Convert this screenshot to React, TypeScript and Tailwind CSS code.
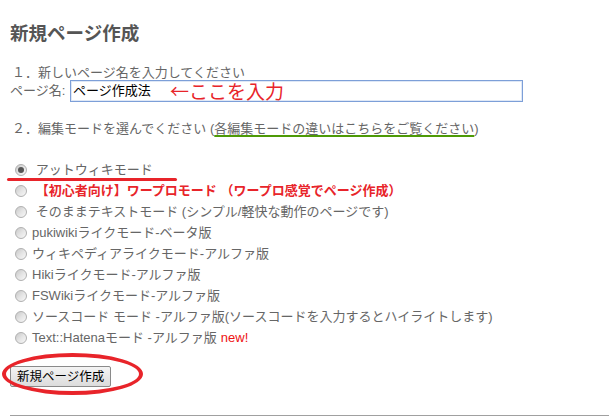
const modes: { label: string; checked?: boolean; lead?: boolean; beginner?: boolean; isNew?: boolean }[] = [
  { label: "アットウィキモード", checked: true, lead: true },
  { label: "【初心者向け】ワープロモード （ワープロ感覚でページ作成）", lead: true, beginner: true },
  { label: "そのままテキストモード (シンプル/軽快な動作のページです)", lead: true },
  { label: "pukiwikiライクモード-ベータ版" },
  { label: "ウィキペディアライクモード-アルファ版" },
  { label: "Hikiライクモード-アルファ版" },
  { label: "FSWikiライクモード-アルファ版" },
  { label: "ソースコード モード -アルファ版(ソースコードを入力するとハイライトします)" },
  { label: "Text::Hatenaモード -アルファ版", isNew: true },
];

function Radio({ checked }: { checked?: boolean }) {
  return (
    <span className="flex h-[12px] w-[12px] shrink-0 items-center justify-center rounded-full border border-[#b0b0b0] bg-gradient-to-br from-[#c8c8c8] via-[#e4e4e4] to-[#f8f8f8]">
      {checked && <span className="h-[6px] w-[6px] rounded-full bg-[#555]" />}
    </span>
  );
}

export default function App() {
  return (
    <div
      className="relative h-[419px] w-[609px] overflow-hidden bg-white pl-[10px] pt-[22px] text-[13px] text-[#666]"
      style={{ fontFamily: '"Liberation Sans", Arial, "Noto Sans CJK JP", sans-serif' }}
    >
      <h1 className="h-[24px] text-[18.5px] font-bold leading-[24px] text-[#555]">新規ページ作成</h1>

      <p className="mt-[18px] pl-[2px] leading-[17px]">１．新しいページ名を入力してください</p>
      <div className="relative mt-[-1px] flex h-[22px] items-center">
        <span className="w-[60px]">ページ名:</span>
        <div className="flex h-[22px] w-[453px] items-center border border-[#7d9fd8] bg-white pl-[2px] text-black shadow-[inset_0_0_0_1px_#dfe8f6]">
          ページ作成法
        </div>
        <span
          className="absolute left-[160px] top-[1px] text-[19px] leading-[20px] text-[#e8242a]"
          style={{ fontFamily: '"Noto Sans CJK JP", sans-serif' }}
        >
          ←ここを入力
        </span>
      </div>

      <p className="mt-[18px] pl-[2px] leading-[18px]">
        ２．編集モードを選んでください (
        <span className="underline decoration-[#4d9a06] decoration-[1.5px] underline-offset-[2px]">各編集モードの違いはこちらをご覧ください</span>)
      </p>

      <ul className="relative mt-[21px] pl-[5px]">
        {modes.map((m) => (
          <li key={m.label} className="flex h-[21px] items-center gap-[5px]">
            <Radio checked={m.checked} />
            <span className={m.beginner ? "font-bold text-[#e8242a]" : ""}>
              {m.lead && "\u00a0"}
              {m.label}
              {m.isNew && <span className="ml-[4px] text-[#ee1111]">new!</span>}
            </span>
          </li>
        ))}
        <span className="absolute left-[-3px] top-[19px] h-[3px] w-[170px] rounded-full bg-[#e8242a]" />
      </ul>

      <div className="relative mt-[18px] h-[21px] w-fit">
        <button className="h-[21px] rounded-[2px] border border-[#8a8a8a] bg-gradient-to-b from-[#f4f4f4] to-[#dcdcdc] px-[6px] text-[12.5px] leading-[18px] text-black">
          新規ページ作成
        </button>
        <span className="pointer-events-none absolute left-[-8px] top-[-13px] h-[42px] w-[141px] rounded-[50%] border-[4px] border-[#e8242a]" />
      </div>

      <hr className="mt-[28px] border-t border-[#a0a0a0]" />
    </div>
  );
}
